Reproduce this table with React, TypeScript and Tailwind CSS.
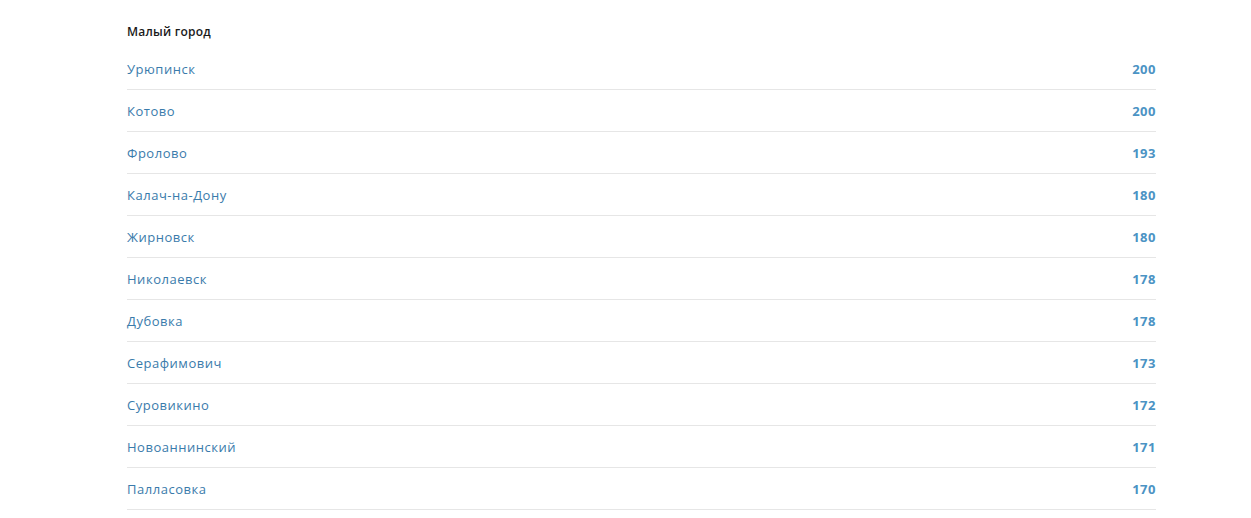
const cities: [string, number][] = [
  ["Урюпинск", 200],
  ["Котово", 200],
  ["Фролово", 193],
  ["Калач-на-Дону", 180],
  ["Жирновск", 180],
  ["Николаевск", 178],
  ["Дубовка", 178],
  ["Серафимович", 173],
  ["Суровикино", 172],
  ["Новоаннинский", 171],
  ["Палласовка", 170],
]

export default function App() {
  return (
    <main
      className="min-h-[518px] bg-white"
      style={{ fontFamily: '"Open Sans", "Liberation Sans", sans-serif' }}
    >
      <div className="ml-[127px] w-[1029px] pt-[24px]">
        <h2 className="h-[24px] text-[12px] font-semibold leading-[16px] tracking-[0.02em] text-[#1a1a1a]">
          Малый город
        </h2>
        <ul>
          {cities.map(([name, score]) => (
            <li
              key={name}
              className="flex h-[42px] items-center justify-between border-b border-[#e6e6e6] pt-[2px]"
            >
              <span className="text-[13px] tracking-[0.04em] text-[#3a7bab]">{name}</span>
              <span className="text-[13px] font-bold tracking-[0.04em] text-[#4b93c4]">{score}</span>
            </li>
          ))}
        </ul>
      </div>
    </main>
  )
}
